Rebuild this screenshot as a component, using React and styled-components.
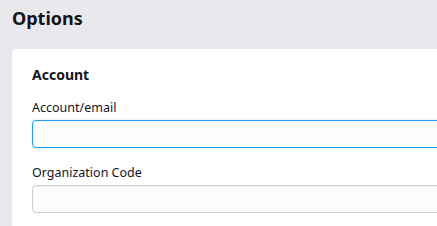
import React from "react";
import styled, { createGlobalStyle } from "styled-components";

const GlobalStyle = createGlobalStyle`
  html, body {
    margin: 0;
    padding: 0;
    background: #e9e9ed;
    font-family: "Noto Sans", "Open Sans", sans-serif;
    color: #15141a;
  }
`;

const Page = styled.main`
  width: 437px;
  height: 226px;
  overflow: hidden;
  padding: 0 0 0 12px;
  box-sizing: border-box;
`;

const Title = styled.h1`
  margin: 0;
  padding-top: 4px;
  height: 45px;
  font-size: 18px;
  font-weight: 700;
  line-height: 28px;
`;

const Card = styled.section`
  background: #fff;
  border-radius: 4px;
  padding: 16px 0 20px 20px;
  margin-right: -20px;
`;

const SectionTitle = styled.h2`
  margin: 0 0 14px;
  font-size: 14px;
  font-weight: 700;
  line-height: 20px;
`;

const Field = styled.div`
  display: flex;
  flex-direction: column;
  gap: 3px;
  margin-bottom: 16px;
`;

const Label = styled.label`
  font-size: 12.5px;
  line-height: 18px;
`;

const Input = styled.input`
  box-sizing: border-box;
  height: 28px;
  width: 100%;
  border: 1px solid ${(p) => (p.$focused ? "#1a9ff0" : "#cfcfd8")};
  border-radius: 4px;
  background: #fdfdfd;
  box-shadow: ${(p) =>
    p.$focused ? "0 0 2px rgba(26,159,240,0.3)" : "inset 0 1px 2px rgba(0,0,0,0.06)"};
  outline: none;
  font: inherit;
  font-size: 12.5px;
  padding: 0 8px;
`;

export default function App() {
  return (
    <Page>
      <GlobalStyle />
      <Title>Options</Title>
      <Card>
        <SectionTitle>Account</SectionTitle>
        <Field>
          <Label>Account/email</Label>
          <Input $focused />
        </Field>
        <Field>
          <Label>Organization Code</Label>
          <Input />
        </Field>
      </Card>
    </Page>
  );
}
